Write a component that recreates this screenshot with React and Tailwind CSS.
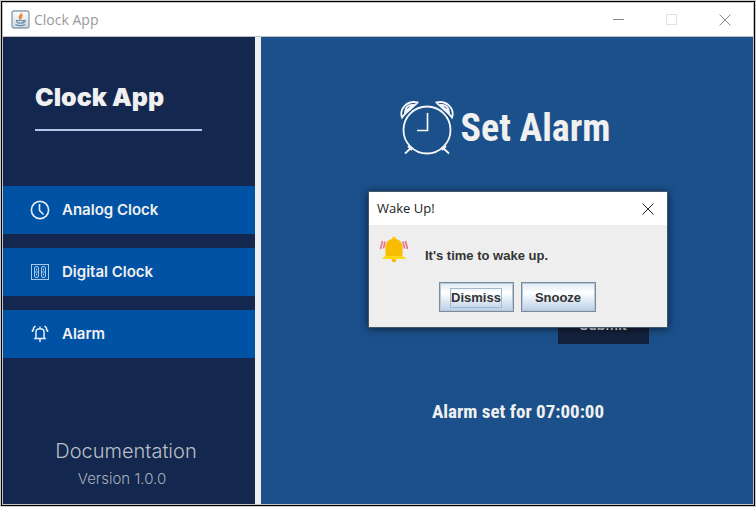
import React from "react";

function JavaIcon() {
  return (
    <svg className="size-[19px] shrink-0" viewBox="0 0 19 19" fill="none" aria-hidden="true">
      <defs>
        <linearGradient id="tile" x1="0" y1="0" x2="0" y2="1">
          <stop offset="0" stopColor="#ffffff" />
          <stop offset="1" stopColor="#ccd8e2" />
        </linearGradient>
      </defs>
      <rect x="1" y="1" width="17" height="17" rx="2" fill="url(#tile)" stroke="#8fa0ae" strokeWidth="1.4" />
      <path d="M10.500 3C11 5 7.500 5.500 8.500 8L9.500 9.500M11.500 5.500C9.500 6.500 9.500 7.500 10.500 9" stroke="#e8893c" strokeWidth="1.600" />
      <path d="M5.500 10.500H12.500V12C12 13.500 6.500 13.500 6 12ZM12.500 10.500C15.500 10 14.500 12.500 12 12.800M4.500 14.500C7 16 12 16 14 14.500" stroke="#6d8ea6" strokeWidth="1.200" />
    </svg>
  );
}

function AnalogIcon() {
  return (
    <svg className="size-5 shrink-0" viewBox="0 0 20 20" fill="none" stroke="#e6f0fa" strokeWidth="1.600" aria-hidden="true">
      <circle cx="10" cy="10" r="8.600" />
      <path d="M9.500 4V10.500L13.500 14.500" />
    </svg>
  );
}

function DigitalIcon() {
  return (
    <svg className="size-5 shrink-0" viewBox="0 0 20 20" fill="none" stroke="#a9caea" aria-hidden="true">
      <rect x="1.500" y="2.500" width="17" height="15" />
      <rect x="4.500" y="4.500" width="4" height="11" rx="1.500" />
      <rect x="11.500" y="4.500" width="4" height="11" rx="1.500" />
      <path d="M4.500 10H8.500M11.500 10H15.500M6.500 6.500V8.500M6.500 11.500V13.500M13.500 6.500V8.500M13.500 11.500V13.500" />
    </svg>
  );
}

function BellIcon() {
  return (
    <svg className="size-5 shrink-0" viewBox="0 0 20 20" fill="none" stroke="#e6f0fa" strokeWidth="1.500" aria-hidden="true">
      <path d="M4 14.500H16M6 14.500V8C6 3.800 14 3.800 14 8V14.500M10 2.500V5M10 14.500V18" />
      <path d="M5.500 2L3.500 4V6.500M14.500 2L16.500 4V6.500M2.500 5.500V8M17.500 5.500V8" />
    </svg>
  );
}

function AlarmClockIcon() {
  return (
    <svg className="size-[54px] shrink-0" viewBox="0 0 54 54" fill="none" stroke="#f4f6f8" strokeWidth="1.800" aria-hidden="true">
      <circle cx="27" cy="29" r="23.500" />
      <path d="M27.500 12V29.500H17" strokeWidth="1.700" />
      <path d="M2 16.500C-1 8 7 -1 17.500 1.500C14 6 5.500 11 2 16.500ZM5 11C5 6 9 3.500 13 4C10.500 6.500 8 8.500 5 11Z" />
      <path d="M52 16.500C55 8 47 -1 36.500 1.500C40 6 48.500 11 52 16.500ZM49 11C49 6 45 3.500 41 4C43.500 6.500 46 8.500 49 11Z" />
      <path d="M12 46L5 52.500M8 45L12 49M42 46L49 52.500M46 45L42 49" />
    </svg>
  );
}

function RingingBell() {
  return (
    <svg className="h-[28px] w-[30px] shrink-0" viewBox="0 0 30 28" aria-hidden="true">
      <circle cx="15" cy="24" r="2.300" fill="#f5b800" />
      <circle cx="15" cy="2.500" r="2" fill="#fdd00d" />
      <path d="M6.500 20V11C6.500 0 23.500 0 23.500 11V20Z" fill="#f8bd00" />
      <path d="M3.500 23C3.500 21.500 5 20.500 7 20H23C25 20.500 26.500 21.500 26.500 23Z" fill="#ffd714" />
      <path d="M3.500 5L1.500 13M6 5.500L4.500 12.500M26.500 5L28.500 13M24 5.500L25.500 12.500" stroke="#e9788c" strokeWidth="1.700" fill="none" />
    </svg>
  );
}

function NavItem({ icon, children }) {
  return (
    <button type="button" className="flex h-12 w-full items-center gap-3 bg-[#0052a4] pl-[27px] text-left font-[Inter,sans-serif] text-[15px] font-semibold text-[#f0f0f0]">
      {icon}
      {children}
    </button>
  );
}

function DialogButton({ children, focused }) {
  return (
    <button type="button" className="flex h-[30px] w-[75px] items-center justify-center border border-[#7a8a99] bg-linear-to-b from-[#dde8f3] via-white via-35% to-[#b8cfe5] pt-[2px] text-[13px] font-bold text-[#333333] shadow-[inset_0_0_0_1px_#b8c8d8]">
      <span className={focused ? "border border-[#a3b8cc] leading-[18px]" : "leading-[18px]"}>{children}</span>
    </button>
  );
}

function CloseIcon({ className }) {
  return (
    <svg className={className} viewBox="0 0 12 12" fill="none" stroke="currentColor" aria-hidden="true">
      <path d="M0.500 0.500L11.500 11.500M11.500 0.500L0.500 11.500" />
    </svg>
  );
}

function WakeDialog() {
  return (
    <section role="dialog" aria-labelledby="wake-title" className="absolute top-[155px] left-[108px] w-[298px] bg-[#eeeeee] font-['Liberation_Sans',sans-serif] shadow-[0_1px_8px_1px_rgba(0,0,0,0.6)] outline outline-[#44576a]">
      <header className="flex h-[33px] items-center justify-between bg-white pr-[13px] pl-2">
        <h2 id="wake-title" className="font-['Open_Sans',sans-serif] text-[13px] font-normal text-[#222222]">Wake Up!</h2>
        <button type="button" aria-label="Close dialog" className="text-[#222222]">
          <CloseIcon className="size-3" />
        </button>
      </header>
      <div className="pt-[11px] pr-3 pb-[15px] pl-[10px]">
        <div className="flex h-[28px] gap-4">
          <RingingBell />
          <p className="mt-[11px] text-[13px] leading-[18px] font-bold text-[#333333]">It's time to wake up.</p>
        </div>
        <div className="mt-[18px] flex justify-center gap-[7px]">
          <DialogButton focused>Dismiss</DialogButton>
          <DialogButton>Snooze</DialogButton>
        </div>
      </div>
    </section>
  );
}

export default function App() {
  return (
    <div className="flex min-h-screen flex-col bg-[#c9c9c9] p-px">
      <div className="flex grow flex-col border border-black bg-[#bfc1c3] p-px">
        <header className="flex h-[33px] items-center bg-white pl-2 font-['Open_Sans',sans-serif] text-[14px] text-[#999999]">
          <JavaIcon />
          <span className="ml-1 grow">Clock App</span>
          <div className="flex items-center gap-[42px] pr-[22px]">
            <button type="button" aria-label="Minimize" className="flex h-3 w-[11px] items-center">
              <span className="h-px w-full bg-[#888888]" />
            </button>
            <button type="button" aria-label="Maximize" className="size-[11px] border border-[#e2e2e2]" />
            <button type="button" aria-label="Close" className="text-[#888888]">
              <CloseIcon className="size-3" />
            </button>
          </div>
        </header>
        <div className="mt-px flex grow bg-[#eeeeee]">
          <aside className="flex w-[252px] shrink-0 flex-col bg-[#14274e] font-[Inter,sans-serif]">
            <h1 className="mx-8 mt-10 text-[25px] leading-[40px] font-black text-[#f0f0f0]">Clock App</h1>
            <div className="mx-8 mt-3 h-[2px] w-[167px] bg-[#b4c4e4]" />
            <nav className="mt-[55px] flex flex-col gap-[14px]">
              <NavItem icon={<AnalogIcon />}>Analog Clock</NavItem>
              <NavItem icon={<DigitalIcon />}>Digital Clock</NavItem>
              <NavItem icon={<BellIcon />}>Alarm</NavItem>
            </nav>
            <footer className="mt-auto flex flex-col items-center pr-[6px] pb-[13px] text-[#b9bfc8]">
              <a href="#docs" className="text-[20px] leading-[32px] font-light">Documentation</a>
              <span className="pr-2 text-[15px] leading-[24px] font-light text-[#a6afbd]">Version 1.0.0</span>
            </footer>
          </aside>
          <main className="relative ml-[6px] flex grow flex-col items-center bg-[#1b508b] font-['Roboto_Condensed','Liberation_Sans_Narrow','Liberation_Sans',sans-serif] font-bold text-[#f0f0f0]">
            <div className="mt-16 flex items-center gap-[6px] pr-[3px]">
              <AlarmClockIcon />
              <h2 className="text-[38px] leading-[54px] font-bold">Set Alarm</h2>
            </div>
            <button type="button" className="mt-[150px] ml-[192px] h-[39px] w-[91px] bg-[#14213d] font-[Inter,sans-serif] text-[14px] font-semibold">Submit</button>
            <p className="mt-[52px] ml-[22px] text-[19px] leading-[32px]">Alarm set for 07:00:00</p>
            <WakeDialog />
          </main>
        </div>
      </div>
    </div>
  );
}
